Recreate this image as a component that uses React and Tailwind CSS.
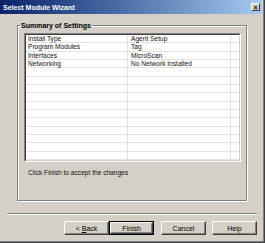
import React from "react";

const rows = [
  ["Install Type", "Agent Setup"],
  ["Program Modules", "Tag"],
  ["Interfaces", "MicroScan"],
  ["Networking", "No Network Installed"],
];

function Btn({ children, def }) {
  const inner = (
    <div className="w-full h-full border border-t-white border-l-white border-r-[#404040] border-b-[#404040] shadow-[inset_-1px_-1px_#808080] flex items-center justify-center text-[7px] leading-none text-black">
      {children}
    </div>
  );
  if (def)
    return <div className="w-[45px] h-[14px] border border-black">{inner}</div>;
  return <div className="w-[45px] h-[14px]">{inner}</div>;
}

export default function App() {
  const all = Array.from({ length: 15 }, (_, i) => rows[i] || ["", ""]);
  return (
    <div
      className="w-[265px] h-[243px] bg-[#d4d0c8] flex flex-col shadow-[inset_-1px_-1px_#404040,inset_-2px_-2px_#808080] overflow-hidden"
      style={{ fontFamily: '"Liberation Sans", Arial, sans-serif' }}
    >
      <div className="h-[14px] mr-[3px] flex items-center justify-between pl-[3px] pr-[2px] bg-gradient-to-r from-[#0a246a] to-[#a6caf0]">
        <span className="text-white font-bold text-[7px] leading-none">Select Module Wizard</span>
        <div className="w-[9px] h-[8px] border border-t-white border-l-white border-r-[#404040] border-b-[#404040] bg-[#d4d0c8] flex items-center justify-center text-[7px] font-bold leading-none text-black">
          ×
        </div>
      </div>
      <div className="flex-1 flex flex-col pl-[7px] pr-[8px]">
        <div className="relative mt-[11px] mx-[10px] h-[176px] border border-[#808080] shadow-[inset_1px_1px_#fff,1px_1px_#fff] pt-[7px] pl-[6px] pr-[5px]">
          <span className="absolute left-[2px] top-[-5px] px-[1px] bg-[#d4d0c8] text-[7px] font-bold leading-[9px] text-black">
            Summary of Settings
          </span>
          <div className="h-[129px] border border-t-[#808080] border-l-[#808080] border-r-white border-b-white">
            <div className="h-full border border-t-[#404040] border-l-[#404040] border-r-[#d4d0c8] border-b-[#d4d0c8] bg-white overflow-hidden">
              {all.map((r, i) => (
                <div key={i} className="flex h-[8.33px] border-b border-[#e2e2e2] text-[6.6px] leading-[7.33px] text-[#111]">
                  <div className="w-[102px] pl-[2px] border-r border-[#e2e2e2] whitespace-nowrap">{r[0]}</div>
                  <div className="w-[103px] pl-[3px] border-r border-[#e2e2e2] whitespace-nowrap">{r[1]}</div>
                  <div className="flex-1" />
                </div>
              ))}
            </div>
          </div>
          <div className="mt-[6px] pl-[4px] text-[6.6px] leading-[9px] text-[#111]">
            Click Finish to accept the changes
          </div>
        </div>
        <div className="mt-[12px] h-[2px] border-t border-[#808080] border-b border-b-white" />
        <div className="mt-[6px] flex justify-end">
          <Btn>
            &lt; <span className="underline ml-[2px]">B</span>ack
          </Btn>
          <Btn def>Finish</Btn>
          <div className="w-[7px]" />
          <Btn>Cancel</Btn>
          <div className="w-[6px]" />
          <Btn>Help</Btn>
        </div>
      </div>
    </div>
  );
}
